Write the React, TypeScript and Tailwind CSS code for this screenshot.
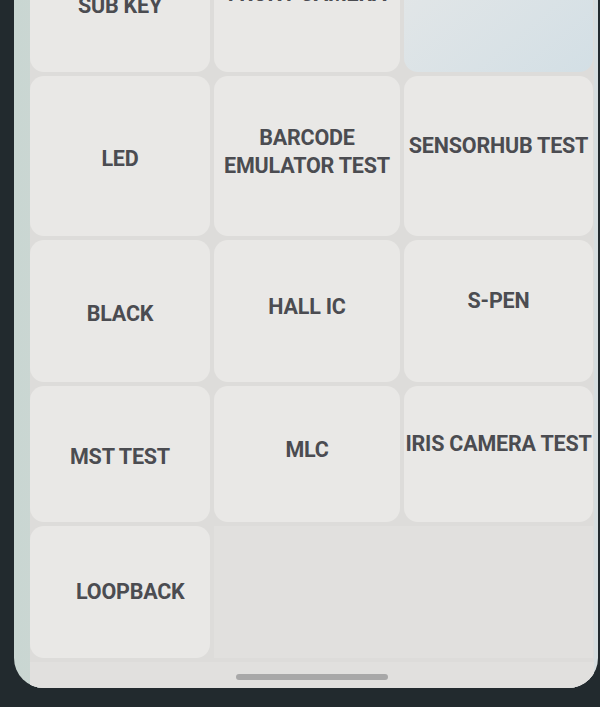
import React from 'react';

const rows: { h: string; items: string[][] }[] = [
  { h: 'h-[160px]', items: [['LED'], ['BARCODE', 'EMULATOR TEST'], ['SENSORHUB TEST']] },
  { h: 'h-[142px]', items: [['BLACK'], ['HALL IC'], ['S-PEN']] },
  { h: 'h-[136px]', items: [['MST TEST'], ['MLC'], ['IRIS CAMERA TEST']] },
];

// the photo is taken at an angle, so labels sit a bit higher toward the right
const shift = ['pt-[6px]', 'pb-[8px]', 'pb-[20px]'];

function Cell({ lines, className = '' }: { lines: string[]; className?: string }) {
  return (
    <div
      className={
        'flex flex-col items-center justify-center rounded-[14px] bg-[#e9e8e6] text-center text-[21.5px] font-bold leading-[28px] tracking-[-0.2px] text-[#4b4c51] ' +
        className
      }
    >
      {lines.map((l) => (
        <span key={l} className="whitespace-nowrap">
          {l}
        </span>
      ))}
    </div>
  );
}

export default function App() {
  return (
    <div
      className="relative h-[707px] w-[600px] overflow-hidden bg-[#222a2e]"
      style={{ fontFamily: 'Roboto, "Liberation Sans", sans-serif' }}
    >
      {/* screen */}
      <div className="ml-[14px] mr-[2px] h-[688px] overflow-hidden rounded-b-[30px] bg-gradient-to-r from-[#c9d6d2] via-[#dcdcd9] to-[#d6dee0] pl-[16px] pr-[4px]">
        <div className="-mt-[82px] flex flex-col gap-[4px] bg-[#dddcda]">
          {/* partial top row */}
          <div className="grid h-[154px] grid-cols-[180px_186px_189px] gap-[4px]">
            <Cell lines={['SUB KEY']} className="justify-start pt-[74px]" />
            <Cell lines={['FRONT CAMERA']} className="justify-start pt-[62px]" />
            <div className="rounded-[14px] bg-gradient-to-br from-[#e6e8e8] to-[#d3dfe5]" />
          </div>
          {rows.map((r, i) => (
            <div key={i} className={'grid grid-cols-[180px_186px_189px] gap-[4px] ' + r.h}>
              {r.items.map((lines, j) => (
                <Cell key={j} lines={lines} className={shift[j]} />
              ))}
            </div>
          ))}
          <div className="grid h-[132px] grid-cols-[180px_186px_189px] gap-[4px]">
            <Cell lines={['LOOPBACK']} className="items-start pl-[46px]" />
            <div className="col-span-2 bg-[#e1e0de]" />
          </div>
          <div className="flex h-[26px] items-end justify-center bg-[#e1e0de] pb-[8px]">
            <div className="h-[6px] w-[152px] rounded-full bg-[#a8a8a8]" />
          </div>
        </div>
      </div>
    </div>
  );
}
